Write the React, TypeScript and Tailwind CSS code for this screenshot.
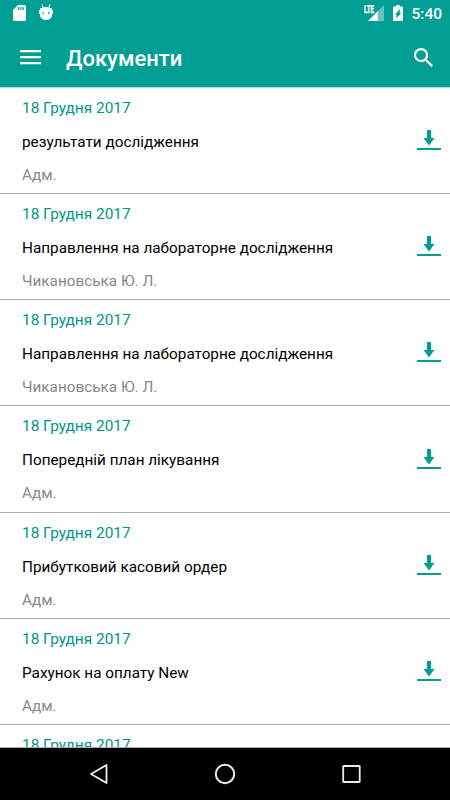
const docs = [
  { title: 'результати дослідження', author: 'Адм.', size: 'h-[106px]' },
  { title: 'Направлення на лабораторне дослідження', author: 'Чикановська Ю. Л.', size: 'h-[106px]' },
  { title: 'Направлення на лабораторне дослідження', author: 'Чикановська Ю. Л.', size: 'h-[106px]' },
  { title: 'Попередній план лікування', author: 'Адм.', size: 'h-[107px]' },
  { title: 'Прибутковий касовий ордер', author: 'Адм.', size: 'h-[106px]' },
  { title: 'Рахунок на оплату New', author: 'Адм.', size: 'h-[106px]' },
  { title: '', author: '', size: 'h-[106px]' },
];

function StatusBar() {
  return (
    <div className="flex h-[27px] shrink-0 items-start text-white">
      <svg className="ml-[13px] mt-[5px]" width="13" height="16" viewBox="0 0 13 16" fill="currentColor">
        <path fillRule="evenodd" d="M5 0h6.500A1.500 1.500 0 0 1 13 1.500v13a1.500 1.500 0 0 1-1.500 1.500h-10A1.500 1.500 0 0 1 0 14.500V5zM5 2v3h1.200V2zm2.300 0v3h1.200V2zm2.300 0v3h1.200V2z" />
      </svg>
      <svg className="ml-[13px] mt-[4px]" width="14" height="17" viewBox="0 0 14 17" fill="currentColor">
        <path d="M3 .3 4.200 3.500M11 .3 9.800 3.500" stroke="currentColor" strokeWidth="1" />
        <path fillRule="evenodd" d="M1 4.500Q3 3 7 3t6 1.500V6l1 .5v3l-1 .5v2Q11.500 16 7 16T1 12v-2L0 9.500v-3L1 6zM3.600 8.300v1.400H5V8.300zm5.400 0v1.400h1.400V8.300z" />
      </svg>
      <svg className="ml-auto mt-[5px]" width="21" height="16" viewBox="0 0 21 16">
        <path d="M20 0v16H4z" fill="#66c4bd" />
        <path d="M14 6v10H4z" fill="#fff" />
        <path d="M0 0h11v8H0z" fill="#009e93" />
        <text x="0" y="7.500" fill="#fff" stroke="#fff" strokeWidth=".4" fontSize="10" fontWeight="700" textLength="10" lengthAdjust="spacingAndGlyphs">LTE</text>
      </svg>
      <svg className="ml-[8px] mt-[5px]" width="10" height="16" viewBox="0 0 10 16">
        <path d="M3 0h4v1.500h2a1 1 0 0 1 1 1V15a1 1 0 0 1-1 1H1a1 1 0 0 1-1-1V2.500a1 1 0 0 1 1-1h2z" fill="#fff" />
        <path d="M6.800 4v3.700h1.500L3.500 13.500V9.700H2z" fill="#009e93" />
      </svg>
      <span className="ml-[8px] mr-[8px] mt-[4px] text-[15.500px] font-medium leading-[20px]">5:40</span>
    </div>
  );
}

function DownloadIcon() {
  return (
    <svg className="mb-px shrink-0" width="24" height="20" viewBox="0 0 24 20" fill="#009e93">
      <path d="M10 0h4v8h3.500L12 15.500 6.500 8H10zM0 18h24v2H0z" />
    </svg>
  );
}

export default function App() {
  return (
    <div className="flex h-[800px] w-[450px] flex-col overflow-hidden bg-white font-['Roboto',sans-serif]">
      <header className="flex h-[88px] shrink-0 flex-col border-b border-[#b8dfdb] bg-[#009e93]">
        <StatusBar />
        <div className="flex h-[60px] items-center text-white">
          <svg className="ml-[20px]" width="21" height="15" viewBox="0 0 21 15" fill="currentColor">
            <path d="M0 0h21v2.200H0zM0 6h21v2.200H0zM0 12h21v2.200H0z" />
          </svg>
          <h1 className="ml-[25px] mt-[3px] text-[22px] font-medium leading-[28px]">Документи</h1>
          <svg className="ml-auto mr-[17px]" width="19" height="19" viewBox="3 3 17.500 17.500" fill="currentColor">
            <path d="M15.500 14h-.79l-.28-.27C15.410 12.590 16 11.110 16 9.500 16 5.910 13.090 3 9.500 3S3 5.910 3 9.500 5.910 16 9.500 16c1.610 0 3.090-.59 4.230-1.570l.27.28v.79l5 4.990L20.490 19l-4.990-5zm-6 0C7.010 14 5 11.990 5 9.500S7.010 5 9.500 5 14 7.010 14 9.500 11.990 14 9.500 14z" />
          </svg>
        </div>
      </header>
      <main className="min-h-0 flex-1 overflow-hidden border-b border-[#aaaaaa]">
        {docs.map((doc, i) => (
          <div key={i} className={`flex items-center justify-between border-b border-[#aaaaaa] pl-[22px] pr-[9px] ${doc.size}`}>
            <div className="flex h-full flex-col pt-[3px] text-[15.300px] leading-[34px]">
              <span className="text-[15.400px] text-[#009688]">18 Грудня 2017</span>
              <span className="text-black">{doc.title}</span>
              <span className="-mt-px text-[#888888]">{doc.author}</span>
            </div>
            <DownloadIcon />
          </div>
        ))}
      </main>
      <nav className="flex h-[52px] shrink-0 items-center bg-black">
        <svg className="ml-[89px]" width="20" height="22" viewBox="0 0 20 22" fill="none" stroke="#eee" strokeWidth="1.800" strokeLinejoin="round">
          <path d="M17.500 2v18L2 11z" />
        </svg>
        <svg className="ml-[105px]" width="22" height="22" viewBox="0 0 22 22" fill="none" stroke="#eee" strokeWidth="2">
          <circle cx="11" cy="11" r="9.200" />
        </svg>
        <svg className="ml-[106px]" width="19" height="18" viewBox="0 0 19 18" fill="none" stroke="#eee" strokeWidth="1.800">
          <rect x="1.200" y="1" width="16.500" height="16" rx=".5" />
        </svg>
      </nav>
    </div>
  );
}
